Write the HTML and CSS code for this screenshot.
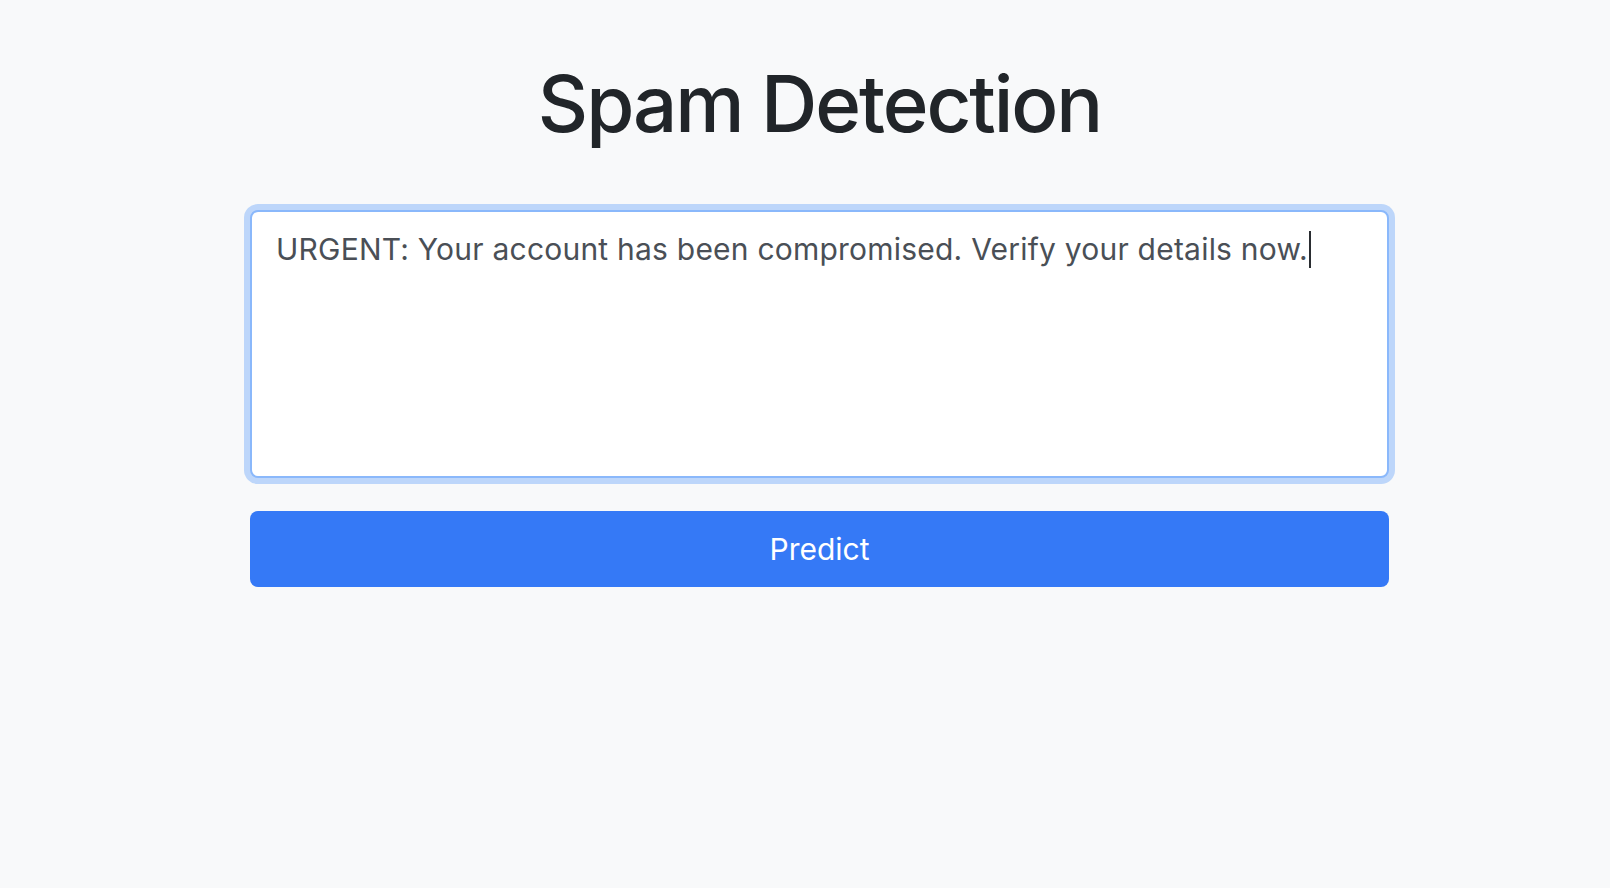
FILE: index.html
```html
<!DOCTYPE html>
<html lang="en">
<head>
<meta charset="utf-8">
<title>Spam Detection</title>
<link rel="stylesheet" href="styles.css">
</head>
<body>
<main class="container">
  <h1 class="title">Spam Detection</h1>
  <form class="form">
    <div class="textbox" role="textbox" aria-multiline="true">URGENT: Your account has been compromised. Verify your details now.<span class="caret"></span></div>
    <button type="button" class="btn">Predict</button>
  </form>
</main>
</body>
</html>
```

FILE: styles.css
```css
html, body {
  margin: 0;
  padding: 0;
  background: #f8f9fa;
  height: 100%;
}
body {
  font-family: Inter, "Noto Sans", "Liberation Sans", sans-serif;
  color: #212529;
}
.container {
  width: 1139px;
  margin-left: 250px;
  padding-top: 57px;
}
.title {
  margin: 0;
  font-size: 78px;
  line-height: 1.2;
  font-weight: 500;
  text-align: center;
  color: #212529;
  letter-spacing: -2.1px;
}
.form {
  margin-top: 59px;
  display: flex;
  flex-direction: column;
  gap: 33px;
}
.textbox {
  box-sizing: border-box;
  height: 268px;
  background: #fff;
  border: 2px solid #8ab8fb;
  border-radius: 8px;
  box-shadow: 0 0 0 6px rgba(13, 110, 253, 0.25);
  padding: 15px 24px;
  font-size: 30px;
  line-height: 45px;
  letter-spacing: 0.22px;
  color: #4a4f56;
}
.caret {
  display: inline-block;
  width: 2px;
  height: 37px;
  background: #2a2d31;
  vertical-align: -8px;
  margin-left: 1px;
}
.btn {
  height: 76px;
  border: none;
  border-radius: 8px;
  background: #3579f6;
  color: #fff;
  font-family: inherit;
  font-size: 30px;
  font-weight: 400;
  cursor: pointer;
}
```
